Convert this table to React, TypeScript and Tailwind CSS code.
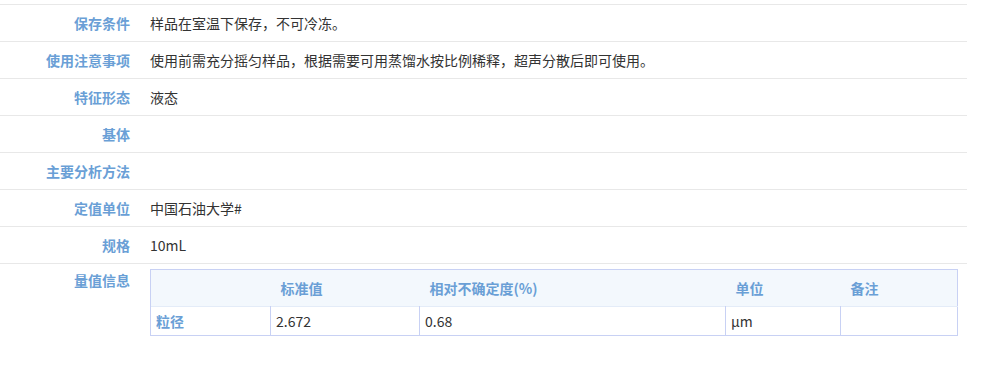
import React from 'react';

const font = { fontFamily: '"Microsoft YaHei", "Noto Sans CJK SC", "Noto Sans", sans-serif' };

const rows: { label: string; value: string }[] = [
  { label: '保存条件', value: '样品在室温下保存，不可冷冻。' },
  { label: '使用注意事项', value: '使用前需充分摇匀样品，根据需要可用蒸馏水按比例稀释，超声分散后即可使用。' },
  { label: '特征形态', value: '液态' },
  { label: '基体', value: '' },
  { label: '主要分析方法', value: '' },
  { label: '定值单位', value: '中国石油大学#' },
  { label: '规格', value: '10mL' },
];

const cols = ['', '标准值', '相对不确定度(%)', '单位', '备注'];
const widths = ['w-[120px]', 'w-[149px]', 'w-[306px]', 'w-[115px]', 'w-[117px]'];
const values = ['粒径', '2.672', '0.68', 'μm', ''];

export default function App() {
  return (
    <div className="w-[983px] h-[377px] bg-white text-[14px]" style={font}>
      <div className="w-[967px] pt-[4px]">
        <div className="border-t border-[#e8e8e8]">
          {rows.map((r) => (
            <div key={r.label} className="flex items-center h-[37px] border-b border-[#e8e8e8]">
              <div className="w-[130px] text-right font-bold text-[#6a9fd6]">{r.label}</div>
              <div className="pl-[20px] text-[#333]">{r.value}</div>
            </div>
          ))}
          <div className="flex pt-[5px]">
            <div className="w-[130px] pt-[1px] text-right font-bold text-[#6a9fd6]">量值信息</div>
            <div className="pl-[20px]">
              <table className="border-collapse border border-[#c8d1f4] table-fixed">
                <thead>
                  <tr className="h-[37px] bg-[#f3f8fd] border-b border-[#e4ecf8]">
                    {cols.map((c, i) => (
                      <th key={i} className={`${widths[i]} px-[10px] text-left font-bold text-[#6a9fd6]`}>
                        {c}
                      </th>
                    ))}
                  </tr>
                </thead>
                <tbody>
                  <tr className="h-[29px]">
                    {values.map((v, i) => (
                      <td
                        key={i}
                        className={`${widths[i]} px-[5px] border-l border-[#c8d1f4] ${
                          i === 0 ? 'font-bold text-[#6a9fd6]' : 'text-[#333]'
                        }`}
                      >
                        {v}
                      </td>
                    ))}
                  </tr>
                </tbody>
              </table>
            </div>
          </div>
        </div>
      </div>
    </div>
  );
}
